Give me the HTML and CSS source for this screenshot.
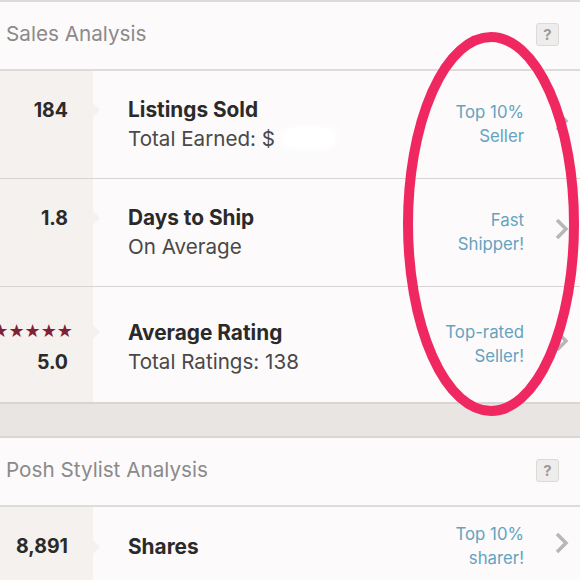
FILE: index.html
```html
<!DOCTYPE html>
<html>
<head>
<meta charset="utf-8">
<link rel="stylesheet" href="styles.css">
</head>
<body>
<div class="page">
  <section class="card">
    <div class="head">
      <h2 class="head-title">Sales Analysis</h2>
      <span class="help">?</span>
    </div>
    <div class="row">
      <div class="stat"><span class="num">184</span></div>
      <div class="info">
        <div class="title">Listings Sold</div>
        <div class="sub">Total Earned: $<span class="blot"></span></div>
      </div>
      <div class="badge">Top 10%<br>Seller</div>
      <svg class="chev" viewBox="0 0 14 22"><path d="M2 2 L11 11 L2 20" /></svg>
    </div>
    <div class="row">
      <div class="stat"><span class="num">1.8</span></div>
      <div class="info">
        <div class="title">Days to Ship</div>
        <div class="sub">On Average</div>
      </div>
      <div class="badge">Fast<br>Shipper!</div>
      <svg class="chev" viewBox="0 0 14 22"><path d="M2 2 L11 11 L2 20" /></svg>
    </div>
    <div class="row row-tall">
      <div class="stat stat-rating">
        <span class="stars">★★★★★</span>
        <span class="num">5.0</span>
      </div>
      <div class="info">
        <div class="title">Average Rating</div>
        <div class="sub">Total Ratings: 138</div>
      </div>
      <div class="badge">Top-rated<br>Seller!</div>
      <svg class="chev" viewBox="0 0 14 22"><path d="M2 2 L11 11 L2 20" /></svg>
    </div>
  </section>
  <div class="band"></div>
  <section class="card">
    <div class="head">
      <h2 class="head-title">Posh Stylist Analysis</h2>
      <span class="help">?</span>
    </div>
    <div class="row row-short">
      <div class="stat"><span class="num">8,891</span></div>
      <div class="info">
        <div class="title">Shares</div>
      </div>
      <div class="badge">Top 10%<br>sharer!</div>
      <svg class="chev" viewBox="0 0 14 22"><path d="M2 2 L11 11 L2 20" /></svg>
    </div>
  </section>
  <svg class="circle" viewBox="0 0 580 580" width="580" height="580">
    <ellipse cx="491" cy="224" rx="83" ry="187" />
  </svg>
</div>
</body>
</html>
```

FILE: styles.css
```css
* { box-sizing: border-box; }
html, body { margin: 0; padding: 0; }
body {
  width: 580px;
  height: 580px;
  overflow: hidden;
  background: #fcfafb;
  font-family: Inter, Lato, sans-serif;
}
.page {
  position: relative;
  width: 580px;
  height: 580px;
  overflow: hidden;
  border-top: 2px solid #dcdada;
}
.card { background: #fcfafb; }
.head {
  height: 69px;
  display: flex;
  align-items: center;
  justify-content: space-between;
  padding: 0 21px 0 6px;
  border-bottom: 2px solid #dddbdb;
}
.head-title {
  margin: -4px 0 0 0;
  font-size: 20.7px;
  font-weight: 400;
  color: #8b8a8a;
}
.help {
  width: 23px;
  height: 23px;
  display: flex;
  align-items: center;
  justify-content: center;
  background: #efedec;
  border: 1px solid #dcdad9;
  border-radius: 3px;
  color: #9c9a99;
  font-weight: 700;
  font-size: 15px;
  margin-top: -2px;
}
.row {
  height: 108px;
  display: flex;
  align-items: stretch;
  border-bottom: 1px solid #d6d4d4;
}
.row-tall { height: 117px; border-bottom: 2px solid #d8d5d3; }
.row-short { height: 80px; border-bottom: 0; }
.stat {
  position: relative;
  width: 93px;
  flex: none;
  background: #f4f1ee;
  display: flex;
  flex-direction: column;
  justify-content: center;
  align-items: flex-end;
  padding-right: 25px;
}
.stat::after {
  content: "";
  position: absolute;
  right: -7px;
  top: 50%;
  margin-top: -22px;
  border-left: 7px solid #f4f1ee;
  border-top: 7px solid transparent;
  border-bottom: 7px solid transparent;
}
.row-tall .stat::after { margin-top: -20px; }
.row-short .stat::after { margin-top: -7px; }
.num {
  font-size: 19.5px;
  font-weight: 700;
  line-height: 24px;
  color: #2b2a2a;
  margin-top: -30px;
}
.row-short .num { margin-top: -2px; }
.stat-rating .num { margin-top: 9px; }
.stars {
  color: #7e2233;
  font-family: "DejaVu Sans", sans-serif;
  font-size: 18px;
  line-height: 20px;
  letter-spacing: 0;
  margin-right: -5px;
  margin-top: 5px;
  white-space: nowrap;
}
.info {
  flex: 1;
  padding-left: 35px;
  display: flex;
  flex-direction: column;
  justify-content: center;
  margin-top: -1px;
}
.row-tall .info { margin-top: 4px; }
.row-short .info { margin-top: -2px; }
.title {
  font-size: 20.8px;
  font-weight: 700;
  color: #2b2a2a;
  line-height: 29px;
}
.sub {
  font-size: 20.6px;
  color: #4a4848;
  line-height: 29px;
  position: relative;
}
.blot {
  position: absolute;
  left: 152px;
  top: 2px;
  width: 58px;
  height: 24px;
  background: #ffffff;
  border-radius: 12px;
  filter: blur(3px);
}
.badge {
  align-self: center;
  text-align: right;
  color: #64a3bf;
  font-size: 16.8px;
  line-height: 24px;
  margin-top: -2px;
}
.chev {
  align-self: center;
  width: 14px;
  height: 22px;
  margin: -8px 11px 0 31px;
  flex: none;
}
.chev path {
  fill: none;
  stroke: #b8b7b7;
  stroke-width: 3.5;
}
.band {
  height: 34px;
  background: #e8e5e3;
  border-bottom: 2px solid #d9d6d4;
}
.circle {
  position: absolute;
  left: 0;
  top: -2px;
  pointer-events: none;
}
.circle ellipse {
  fill: none;
  stroke: #f02862;
  stroke-width: 10;
}
```
